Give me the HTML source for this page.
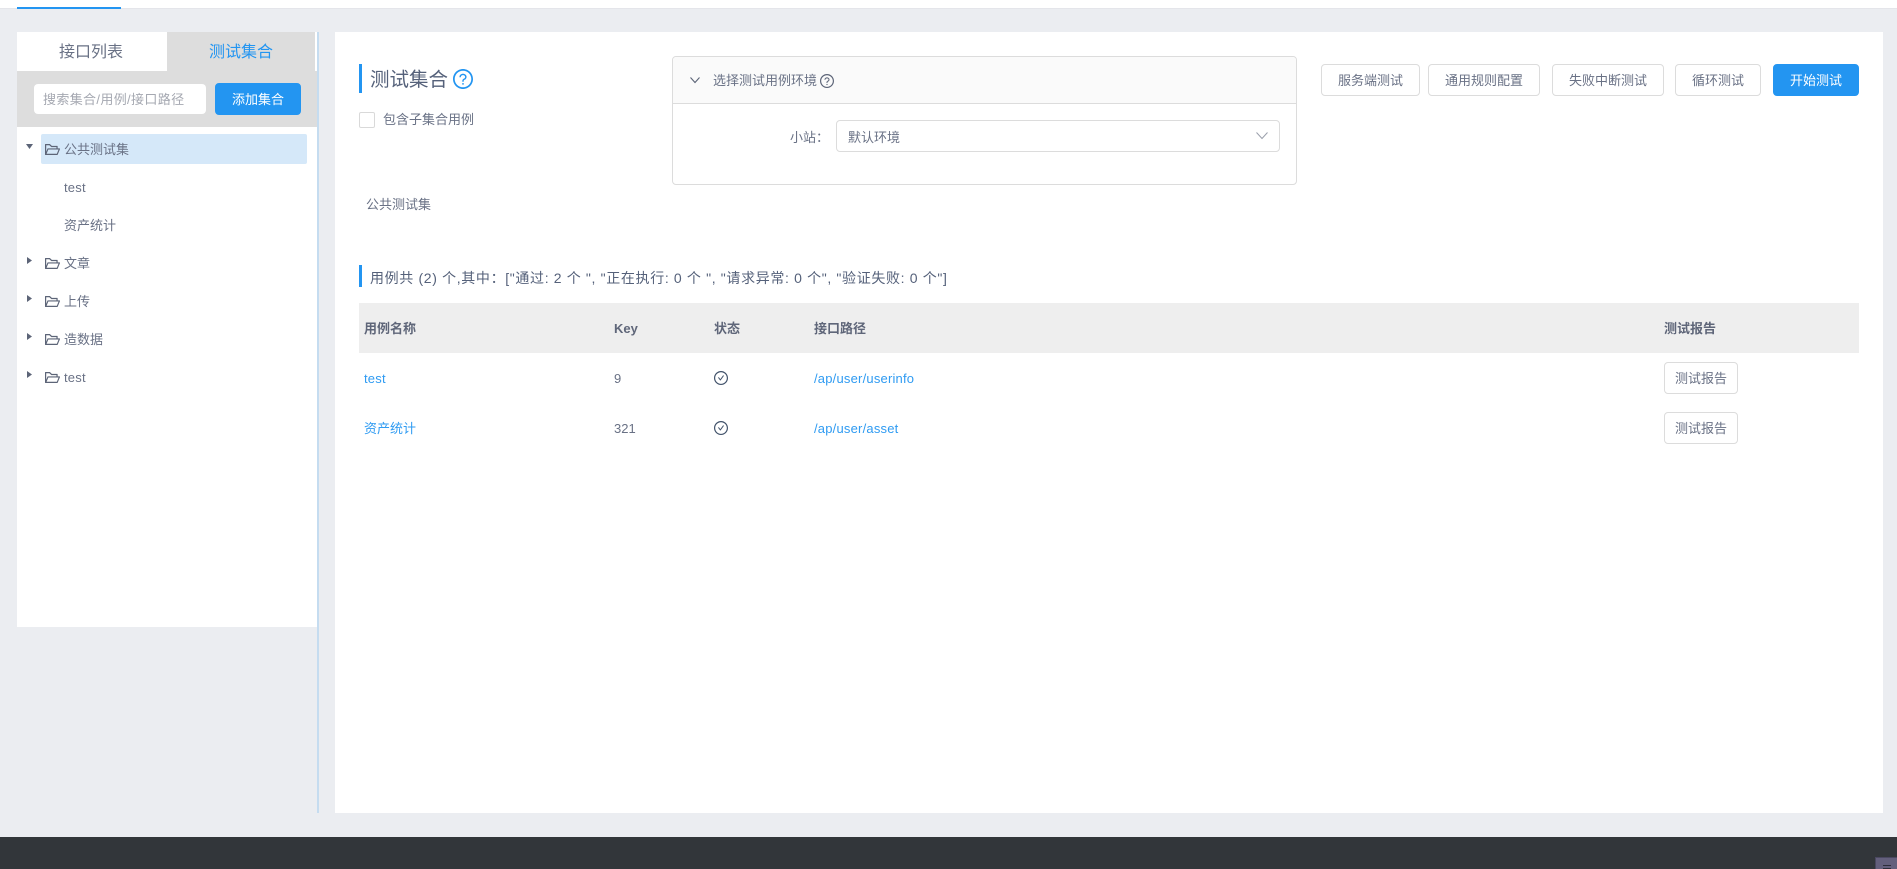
<!DOCTYPE html>
<html lang="zh-CN">
<head>
<meta charset="utf-8">
<title>测试集合</title>
<style>
html,body{margin:0;padding:0;width:1897px;height:869px;overflow:hidden;background:#ebedf1}
body{position:relative;font-family:"Liberation Sans","Noto Sans CJK SC",sans-serif;font-size:13px;color:#697185}
.a{position:absolute;box-sizing:border-box}
.t{position:absolute;white-space:nowrap;line-height:20px;height:20px;margin-top:1px}
.btn{position:absolute;box-sizing:border-box;height:32px;line-height:31px;border:1px solid #dcdcdc;border-radius:4px;background:#fff;text-align:center;font-size:13px;color:#697185}
.blue{background:#2395f1;border-color:#2395f1;color:#fff}
.b{font-weight:bold;color:#5f6679}
.l{color:#2f9bf2;letter-spacing:.2px}
svg{position:absolute;display:block}
</style>
</head>
<body>
<div class="a" style="left:0;top:0;width:1897px;height:9px;background:#fff;border-bottom:1px solid #e4e5ea"></div>
<div class="a" style="left:17px;top:7px;width:104px;height:2px;background:#2395f1"></div>

<div class="a" style="left:17px;top:32px;width:300px;height:595px;background:#fff"></div>
<div class="a" style="left:167px;top:32px;width:148px;height:39px;background:#ddd"></div>
<div class="a" style="left:17px;top:71px;width:300px;height:56px;background:#ddd"></div>
<div class="a" style="left:317px;top:32px;width:2px;height:781px;background:#c5dcf0"></div>
<div class="t" style="left:59px;top:42px;font-size:16px">接口列表</div>
<div class="t" style="left:209px;top:42px;font-size:16px;color:#2395f1">测试集合</div>
<div class="a" style="left:34px;top:84px;width:172px;height:30px;background:#fff;border-radius:4px"></div>
<div class="t" style="left:43px;top:89px;font-size:13px;letter-spacing:.35px;color:#a5a8b1">搜索集合/用例/接口路径</div>
<div class="btn blue" style="left:215px;top:83px;width:86px">添加集合</div>

<div class="a" style="left:41px;top:134px;width:266px;height:30px;background:#d5e8f9;border-radius:2px"></div>
<svg style="left:26px;top:144px" width="7" height="5" viewBox="0 0 7 5"><path d="M0 0H7L3.5 5Z" fill="#5c6477"/></svg>
<svg style="left:45px;top:142px" width="15" height="15" viewBox="64 64 896 896"><path fill="#5c6477" d="M928 444H820V330.4c0-17.7-14.3-32-32-32H473L355.7 186.2a8.15 8.15 0 0 0-5.5-2.2H96c-17.7 0-32 14.3-32 32v592c0 17.7 14.3 32 32 32h698c13 0 24.8-7.9 29.7-20l134-332c1.5-3.8 2.3-7.9 2.3-12 0-17.7-14.3-32-32-32zM136 256h188.5l119.6 114.4H748V444H238c-13 0-24.8 7.9-29.7 20L136 643.2V256zm635.3 512H159l103.3-256h612.4L771.3 768z"/></svg>
<div class="t" style="left:64px;top:139px">公共测试集</div>
<div class="t" style="left:64px;top:177px;letter-spacing:.2px">test</div>
<div class="t" style="left:64px;top:215px">资产统计</div>

<svg style="left:27px;top:257px" width="5" height="7" viewBox="0 0 5 7"><path d="M0 0L5 3.5L0 7Z" fill="#5c6477"/></svg>
<svg style="left:45px;top:256px" width="15" height="15" viewBox="64 64 896 896"><path fill="#5c6477" d="M928 444H820V330.4c0-17.7-14.3-32-32-32H473L355.7 186.2a8.15 8.15 0 0 0-5.5-2.2H96c-17.7 0-32 14.3-32 32v592c0 17.7 14.3 32 32 32h698c13 0 24.8-7.9 29.7-20l134-332c1.5-3.8 2.3-7.9 2.3-12 0-17.7-14.3-32-32-32zM136 256h188.5l119.6 114.4H748V444H238c-13 0-24.8 7.9-29.7 20L136 643.2V256zm635.3 512H159l103.3-256h612.4L771.3 768z"/></svg>
<div class="t" style="left:64px;top:253px">文章</div>

<svg style="left:27px;top:295px" width="5" height="7" viewBox="0 0 5 7"><path d="M0 0L5 3.5L0 7Z" fill="#5c6477"/></svg>
<svg style="left:45px;top:294px" width="15" height="15" viewBox="64 64 896 896"><path fill="#5c6477" d="M928 444H820V330.4c0-17.7-14.3-32-32-32H473L355.7 186.2a8.15 8.15 0 0 0-5.5-2.2H96c-17.7 0-32 14.3-32 32v592c0 17.7 14.3 32 32 32h698c13 0 24.8-7.9 29.7-20l134-332c1.5-3.8 2.3-7.9 2.3-12 0-17.7-14.3-32-32-32zM136 256h188.5l119.6 114.4H748V444H238c-13 0-24.8 7.9-29.7 20L136 643.2V256zm635.3 512H159l103.3-256h612.4L771.3 768z"/></svg>
<div class="t" style="left:64px;top:291px">上传</div>

<svg style="left:27px;top:333px" width="5" height="7" viewBox="0 0 5 7"><path d="M0 0L5 3.5L0 7Z" fill="#5c6477"/></svg>
<svg style="left:45px;top:332px" width="15" height="15" viewBox="64 64 896 896"><path fill="#5c6477" d="M928 444H820V330.4c0-17.7-14.3-32-32-32H473L355.7 186.2a8.15 8.15 0 0 0-5.5-2.2H96c-17.7 0-32 14.3-32 32v592c0 17.7 14.3 32 32 32h698c13 0 24.8-7.9 29.7-20l134-332c1.5-3.8 2.3-7.9 2.3-12 0-17.7-14.3-32-32-32zM136 256h188.5l119.6 114.4H748V444H238c-13 0-24.8 7.9-29.7 20L136 643.2V256zm635.3 512H159l103.3-256h612.4L771.3 768z"/></svg>
<div class="t" style="left:64px;top:329px">造数据</div>

<svg style="left:27px;top:371px" width="5" height="7" viewBox="0 0 5 7"><path d="M0 0L5 3.5L0 7Z" fill="#5c6477"/></svg>
<svg style="left:45px;top:370px" width="15" height="15" viewBox="64 64 896 896"><path fill="#5c6477" d="M928 444H820V330.4c0-17.7-14.3-32-32-32H473L355.7 186.2a8.15 8.15 0 0 0-5.5-2.2H96c-17.7 0-32 14.3-32 32v592c0 17.7 14.3 32 32 32h698c13 0 24.8-7.9 29.7-20l134-332c1.5-3.8 2.3-7.9 2.3-12 0-17.7-14.3-32-32-32zM136 256h188.5l119.6 114.4H748V444H238c-13 0-24.8 7.9-29.7 20L136 643.2V256zm635.3 512H159l103.3-256h612.4L771.3 768z"/></svg>
<div class="t" style="left:64px;top:367px;letter-spacing:.2px">test</div>

<div class="a" style="left:335px;top:32px;width:1548px;height:781px;background:#fff"></div>

<div class="a" style="left:359px;top:64px;width:3px;height:29px;background:#2395f1"></div>
<div class="t" style="left:370px;top:67px;font-size:19.5px;line-height:24px;height:24px;color:#55617a">测试集合</div>
<svg style="left:453px;top:69px" width="20" height="20" viewBox="64 64 896 896" fill="#2395f1"><path d="M512 64C264.6 64 64 264.6 64 512s200.6 448 448 448 448-200.6 448-448S759.4 64 512 64zm0 820c-205.4 0-372-166.6-372-372s166.6-372 372-372 372 166.6 372 372-166.6 372-372 372z"/><path d="M623.6 316.7C593.6 290.4 554 276 512 276s-81.6 14.5-111.6 40.7C369.2 344 352 380.7 352 420v7.6c0 4.4 3.6 8 8 8h48c4.4 0 8-3.6 8-8V420c0-44.1 43.1-80 96-80s96 35.9 96 80c0 31.1-22 59.6-56.1 72.7-21.2 8.1-39.2 22.3-52.1 40.9-13.1 19-19.9 41.8-19.9 65.8V628c0 4.4 3.6 8 8 8h48c4.4 0 8-3.6 8-8v-29.4a48.3 48.3 0 0 1 30.9-44.8c59-22.7 97.1-74.7 97.1-132.5.1-39.3-17.1-76-48.3-103.3z"/><path d="M472 732a40 40 0 1 0 80 0 40 40 0 1 0-80 0z"/></svg>
<div class="a" style="left:359px;top:112px;width:16px;height:16px;border:1px solid #d9d9d9;border-radius:2px;background:#fff"></div>
<div class="t" style="left:383px;top:109px">包含子集合用例</div>
<div class="t" style="left:366px;top:194px">公共测试集</div>

<div class="a" style="left:672px;top:56px;width:625px;height:129px;border:1px solid #dcdcdc;border-radius:4px;background:#fff"></div>
<div class="a" style="left:673px;top:57px;width:623px;height:47px;background:#fafafa;border-bottom:1px solid #dcdcdc;border-radius:3px 3px 0 0"></div>
<svg style="left:690px;top:76px" width="10" height="8" viewBox="0 0 10 8"><path d="M.5 1.5L5 6.5L9.5 1.5" fill="none" stroke="#5c6477" stroke-width="1.1"/></svg>
<div class="t" style="left:713px;top:70px">选择测试用例环境</div>
<svg style="left:820px;top:74px" width="14" height="14" viewBox="64 64 896 896" fill="#5c6477"><path d="M512 64C264.6 64 64 264.6 64 512s200.6 448 448 448 448-200.6 448-448S759.4 64 512 64zm0 820c-205.4 0-372-166.6-372-372s166.6-372 372-372 372 166.6 372 372-166.6 372-372 372z"/><path d="M623.6 316.7C593.6 290.4 554 276 512 276s-81.6 14.5-111.6 40.7C369.2 344 352 380.7 352 420v7.6c0 4.4 3.6 8 8 8h48c4.4 0 8-3.6 8-8V420c0-44.1 43.1-80 96-80s96 35.9 96 80c0 31.1-22 59.6-56.1 72.7-21.2 8.1-39.2 22.3-52.1 40.9-13.1 19-19.9 41.8-19.9 65.8V628c0 4.4 3.6 8 8 8h48c4.4 0 8-3.6 8-8v-29.4a48.3 48.3 0 0 1 30.9-44.8c59-22.7 97.1-74.7 97.1-132.5.1-39.3-17.1-76-48.3-103.3z"/><path d="M472 732a40 40 0 1 0 80 0 40 40 0 1 0-80 0z"/></svg>
<div class="t" style="left:790px;top:127px">小站：</div>
<div class="a" style="left:836px;top:120px;width:444px;height:32px;border:1px solid #dcdcdc;border-radius:4px;background:#fff"></div>
<div class="t" style="left:848px;top:127px">默认环境</div>
<svg style="left:1256px;top:131px" width="12" height="9" viewBox="0 0 12 9"><path d="M.5 1.5L6 7.5L11.5 1.5" fill="none" stroke="#9a9fab" stroke-width="1"/></svg>

<div class="btn" style="left:1321px;top:64px;width:99px">服务端测试</div>
<div class="btn" style="left:1428px;top:64px;width:112px">通用规则配置</div>
<div class="btn" style="left:1552px;top:64px;width:112px">失败中断测试</div>
<div class="btn" style="left:1675px;top:64px;width:86px">循环测试</div>
<div class="btn blue" style="left:1773px;top:64px;width:86px">开始测试</div>

<div class="a" style="left:359px;top:265px;width:3px;height:22px;background:#2395f1"></div>
<div class="t" style="left:370px;top:267px;font-size:14px;color:#55617a;letter-spacing:.65px">用例共 (2) 个,其中：["通过: 2 个 ", "正在执行: 0 个 ", "请求异常: 0 个", "验证失败: 0 个"]</div>

<div class="a" style="left:359px;top:303px;width:1500px;height:50px;background:#eee"></div>
<div class="t b" style="left:364px;top:318px">用例名称</div>
<div class="t b" style="left:614px;top:318px">Key</div>
<div class="t b" style="left:714px;top:318px">状态</div>
<div class="t b" style="left:814px;top:318px">接口路径</div>
<div class="t b" style="left:1664px;top:318px">测试报告</div>

<div class="t l" style="left:364px;top:368px">test</div>
<div class="t" style="left:614px;top:368px">9</div>
<svg style="left:714px;top:371px" width="14" height="14" viewBox="64 64 896 896" fill="#41526a"><path d="M699 353h-46.9c-10.2 0-19.9 4.9-25.9 13.3L469 584.3l-71.2-98.8c-6-8.3-15.6-13.3-25.9-13.3H325c-6.5 0-10.3 7.4-6.5 12.7l124.6 172.8a31.8 31.8 0 0 0 51.7 0l210.6-292c3.9-5.3.1-12.7-6.4-12.7z"/><path d="M512 64C264.6 64 64 264.6 64 512s200.6 448 448 448 448-200.6 448-448S759.4 64 512 64zm0 820c-205.4 0-372-166.6-372-372s166.6-372 372-372 372 166.6 372 372-166.6 372-372 372z"/></svg>
<div class="t l" style="left:814px;top:368px">/ap/user/userinfo</div>
<div class="btn" style="left:1664px;top:362px;width:74px">测试报告</div>

<div class="t l" style="left:364px;top:418px;letter-spacing:0">资产统计</div>
<div class="t" style="left:614px;top:418px">321</div>
<svg style="left:714px;top:421px" width="14" height="14" viewBox="64 64 896 896" fill="#41526a"><path d="M699 353h-46.9c-10.2 0-19.9 4.9-25.9 13.3L469 584.3l-71.2-98.8c-6-8.3-15.6-13.3-25.9-13.3H325c-6.5 0-10.3 7.4-6.5 12.7l124.6 172.8a31.8 31.8 0 0 0 51.7 0l210.6-292c3.9-5.3.1-12.7-6.4-12.7z"/><path d="M512 64C264.6 64 64 264.6 64 512s200.6 448 448 448 448-200.6 448-448S759.4 64 512 64zm0 820c-205.4 0-372-166.6-372-372s166.6-372 372-372 372 166.6 372 372-166.6 372-372 372z"/></svg>
<div class="t l" style="left:814px;top:418px">/ap/user/asset</div>
<div class="btn" style="left:1664px;top:412px;width:74px">测试报告</div>

<div class="a" style="left:0;top:837px;width:1897px;height:32px;background:#32363a"></div>
<div class="a" style="left:1875px;top:857px;width:22px;height:12px;background:#635f7c;border:1px solid #4a4860;border-width:1px 0 0 1px"></div>
<div class="a" style="left:1883px;top:865px;width:8px;height:1px;background:#2d2d3a"></div>
<div class="a" style="left:1883px;top:868px;width:8px;height:1px;background:#2d2d3a"></div>
</body>
</html>
